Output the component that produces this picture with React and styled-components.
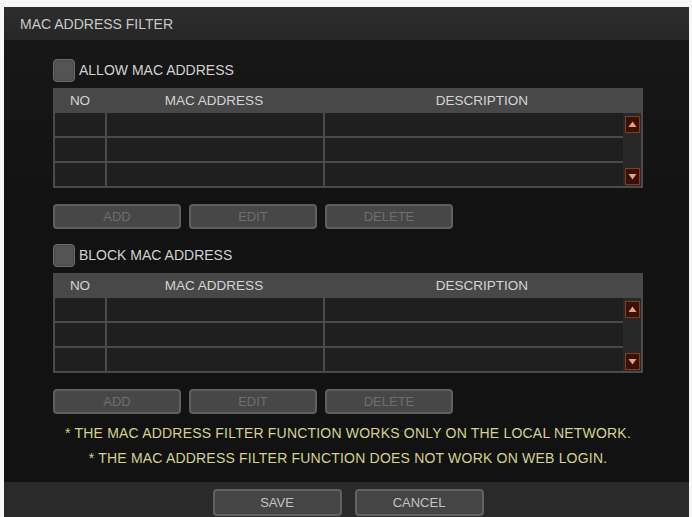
import React from "react";
import styled, { createGlobalStyle } from "styled-components";

const GlobalStyle = createGlobalStyle`
  html, body {
    margin: 0;
    padding: 0;
    background: #f7f7f7;
  }
  * { box-sizing: border-box; }
`;

const Page = styled.div`
  width: 692px;
  height: 517px;
  padding: 7px 3px 0 4px;
  font-family: "Liberation Sans", Arial, sans-serif;
  overflow: hidden;
`;

const Window = styled.div`
  height: 510px;
  display: flex;
  flex-direction: column;
  background: #131313;
`;

const TitleBar = styled.div`
  height: 33px;
  display: flex;
  align-items: center;
  padding-left: 16px;
  background: linear-gradient(#2d2d2d, #272727);
  color: #c9c9c9;
  font-size: 14px;
`;

const Body = styled.div`
  flex: 1;
  padding: 18px 46px 0 49px;
  background: linear-gradient(#171717, #121212 40%);
`;

const CheckRow = styled.label`
  height: 24px;
  display: flex;
  align-items: center;
  gap: 4px;
  margin-bottom: 6px;
  color: #d2d2d2;
  font-size: 14px;
`;

const CheckBox = styled.span`
  width: 22px;
  height: 23px;
  border-radius: 4px;
  background: #545454;
  border: 1px solid #6c6c6c;
  box-shadow: inset 0 0 2px rgba(0, 0, 0, 0.4);
`;

const Table = styled.div`
  border: 2px solid #4a4a4a;
  border-top: none;
  background: #4a4a4a;
`;

const HeadRow = styled.div`
  height: 25px;
  display: grid;
  grid-template-columns: 50px 218px 1fr;
  align-items: center;
  background: #484848;
  color: #d4d4d4;
  font-size: 13.5px;
  text-align: center;
`;

const Grid = styled.div`
  display: grid;
  grid-template-columns: 50px 216px 298px 1fr;
  grid-template-rows: repeat(3, 23px);
  gap: 2px;
`;

const Cell = styled.div`
  background: #1f1f1f;
`;

const Scroll = styled.div`
  grid-column: 4;
  grid-row: 1 / 4;
  margin-left: -2px;
  background: #282828;
  display: flex;
  flex-direction: column;
  justify-content: space-between;
  align-items: center;
  padding: 3px 0 1px;
`;

const ArrowBtn = styled.div`
  width: 15px;
  height: 17px;
  background: #3a1108;
  border: 1px solid #7d3e22;
  display: flex;
  align-items: center;
  justify-content: center;
`;

const ButtonRow = styled.div`
  display: flex;
  gap: 8px;
  margin-top: 16px;
  margin-bottom: 14px;
`;

const Button = styled.button`
  width: 128px;
  height: 25px;
  border-radius: 4px;
  border: 2px solid #5f5f5f;
  background: #474747;
  color: ${(p) => (p.disabled ? "#6e6e6e" : "#c4c4c4")};
  font-family: inherit;
  font-size: 13px;
  padding: 0;
`;

const Notes = styled.div`
  margin-top: -7px;
  color: #d5d290;
  font-size: 14px;
  letter-spacing: 0.2px;
  text-align: center;
  line-height: 25px;
`;

const Footer = styled.div`
  height: 35px;
  display: flex;
  justify-content: center;
  align-items: flex-start;
  gap: 13px;
  padding-top: 7px;
  padding-left: 3px;
  background: #2a2a2a;
`;

const FooterButton = styled(Button)`
  width: 129px;
  height: 27px;
  border-color: #626262;
  background: #454545;
`;

function Arrow({ down }) {
  return (
    <svg width="9" height="7" viewBox="0 0 9 7">
      <path
        d={down ? "M0.5 1 H8.5 L4.5 6.5 Z" : "M0.5 6 H8.5 L4.5 0.5 Z"}
        fill="#eba178"
      />
    </svg>
  );
}

function MacSection({ title }) {
  const cells = [];
  for (let r = 0; r < 3; r++) {
    for (let c = 0; c < 3; c++) cells.push(<Cell key={`${r}-${c}`} />);
  }
  return (
    <>
      <CheckRow>
        <CheckBox />
        {title}
      </CheckRow>
      <Table>
        <HeadRow>
          <span>NO</span>
          <span>MAC ADDRESS</span>
          <span>DESCRIPTION</span>
        </HeadRow>
        <Grid>
          {cells}
          <Scroll>
            <ArrowBtn>
              <Arrow />
            </ArrowBtn>
            <ArrowBtn>
              <Arrow down />
            </ArrowBtn>
          </Scroll>
        </Grid>
      </Table>
      <ButtonRow>
        <Button disabled>ADD</Button>
        <Button disabled>EDIT</Button>
        <Button disabled>DELETE</Button>
      </ButtonRow>
    </>
  );
}

export default function App() {
  return (
    <Page>
      <GlobalStyle />
      <Window>
        <TitleBar>MAC ADDRESS FILTER</TitleBar>
        <Body>
          <MacSection title="ALLOW MAC ADDRESS" />
          <MacSection title="BLOCK MAC ADDRESS" />
          <Notes>
            * THE MAC ADDRESS FILTER FUNCTION WORKS ONLY ON THE LOCAL NETWORK.
            <br />* THE MAC ADDRESS FILTER FUNCTION DOES NOT WORK ON WEB LOGIN.
          </Notes>
        </Body>
        <Footer>
          <FooterButton>SAVE</FooterButton>
          <FooterButton>CANCEL</FooterButton>
        </Footer>
      </Window>
    </Page>
  );
}
